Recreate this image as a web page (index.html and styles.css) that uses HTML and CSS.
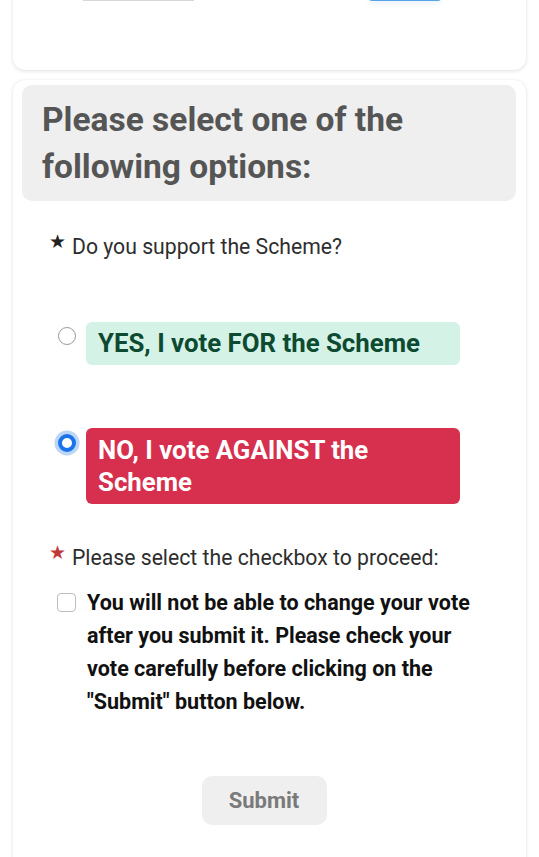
FILE: index.html
```html
<!DOCTYPE html>
<html lang="en">
<head>
<meta charset="utf-8">
<title>Vote</title>
<link rel="stylesheet" href="styles.css">
</head>
<body>
<div class="card card-top">
  <div class="stub-row">
    <div class="stub stub-gray"></div>
    <div class="stub stub-blue"></div>
  </div>
</div>

<div class="card card-main">
  <div class="heading-box">
    <h2 class="heading">Please select one of the following options:</h2>
  </div>

  <div class="question">
    <span class="star">&#9733;</span>
    <span class="q-text">Do you support the Scheme?</span>
  </div>

  <div class="option option-yes">
    <span class="radio"></span>
    <span class="opt-label yes-label">YES, I vote FOR the Scheme</span>
  </div>

  <div class="option option-no">
    <span class="radio radio-checked"></span>
    <span class="opt-label no-label">NO, I vote AGAINST the Scheme</span>
  </div>

  <div class="question question-2">
    <span class="star star-red">&#9733;</span>
    <span class="q-text">Please select the checkbox to proceed:</span>
  </div>

  <div class="confirm">
    <span class="checkbox"></span>
    <span class="confirm-text">You will not be able to change your vote after you submit it. Please check your vote carefully before clicking on the "Submit" button below.</span>
  </div>

  <div class="submit-row">
    <button class="submit">Submit</button>
  </div>
</div>
</body>
</html>
```

FILE: styles.css
```css
* { box-sizing: border-box; }

html, body {
  margin: 0;
  padding: 0;
  background: #ffffff;
  overflow: hidden;
}

body {
  padding: 0 13px;
  font-family: Roboto, "Liberation Sans", Arial, sans-serif;
  color: #333;
}

.card {
  background: #fff;
  border-radius: 12px;
  box-shadow: 0 1px 4px rgba(0, 0, 0, 0.12), 0 0 1px rgba(0, 0, 0, 0.08);
}

.card-top {
  margin-top: -30px;
  height: 100px;
}

.stub-row {
  display: flex;
  padding-left: 70px;
}

.stub {
  height: 31px;
}

.stub-gray {
  width: 111px;
  border-bottom: 1px solid #d8d8d8;
}

.stub-blue {
  width: 72px;
  margin-left: 175px;
  border-bottom: 2px solid #5aa3ea;
  box-shadow: 0 3px 6px rgba(90, 163, 234, 0.12);
  border-radius: 0 0 3px 3px;
}

.card-main {
  margin-top: 10px;
  padding: 5px 10px 40px 9px;
  border-radius: 12px 12px 0 0;
  min-height: 800px;
}

.heading-box {
  background: #efefef;
  border-radius: 10px;
  padding: 11px 20px 11px 20px;
}

.heading {
  margin: 0;
  font-size: 33.5px;
  line-height: 47px;
  font-weight: 700;
  color: #555555;
}

.question {
  display: flex;
  align-items: flex-start;
  margin-top: 33px;
  padding-left: 27px;
  font-size: 21.2px;
  line-height: 26px;
  color: #2e2e2e;
}

.star {
  flex: none;
  font-size: 19px;
  line-height: 16px;
  width: 23px;
  padding-left: 0;
  color: #222;
}

.star-red {
  color: #c0393b;
}

.option {
  display: flex;
  align-items: flex-start;
  padding-left: 36px;
}

.option-yes {
  margin-top: 62px;
}

.option-no {
  margin-top: 63px;
}

.radio {
  flex: none;
  width: 18px;
  height: 18px;
  margin-top: 5px;
  border: 1px solid #9a9a9a;
  border-radius: 50%;
  background: #fff;
  margin-right: 10px;
}

.radio-checked {
  margin-top: 6px;
  border: 4.5px solid #1a73e8;
  box-shadow: 0 0 0 3.5px #bcd6f7;
}

.opt-label {
  flex: 1;
  font-weight: 700;
  font-size: 25.8px;
  line-height: 33px;
  padding: 5px 12px;
  border-radius: 6px;
  margin-right: 56px;
}

.yes-label {
  background: #d4f3e6;
  color: #0d4a31;
}

.no-label {
  background: #d72f4e;
  color: #ffffff;
  line-height: 32px;
  padding: 6px 12px 6px 12px;
}

.question-2 {
  margin-top: 41px;
}

.confirm {
  display: flex;
  align-items: flex-start;
  margin-top: 15px;
  padding-left: 35px;
}

.checkbox {
  flex: none;
  width: 19px;
  height: 19px;
  margin-top: 7px;
  border: 1px solid #bdbdbd;
  border-radius: 4px;
  margin-right: 11px;
}

.confirm-text {
  font-weight: 700;
  font-size: 21.5px;
  line-height: 33px;
  color: #111;
  padding-right: 30px;
}

.submit-row {
  display: flex;
  justify-content: center;
  margin-top: 58px;
  padding-right: 10px;
}

.submit {
  width: 125px;
  height: 49px;
  border: none;
  border-radius: 10px;
  background: #efefef;
  color: #7a7a7a;
  font-family: Roboto, "Liberation Sans", Arial, sans-serif;
  font-weight: 700;
  font-size: 22px;
}
```
